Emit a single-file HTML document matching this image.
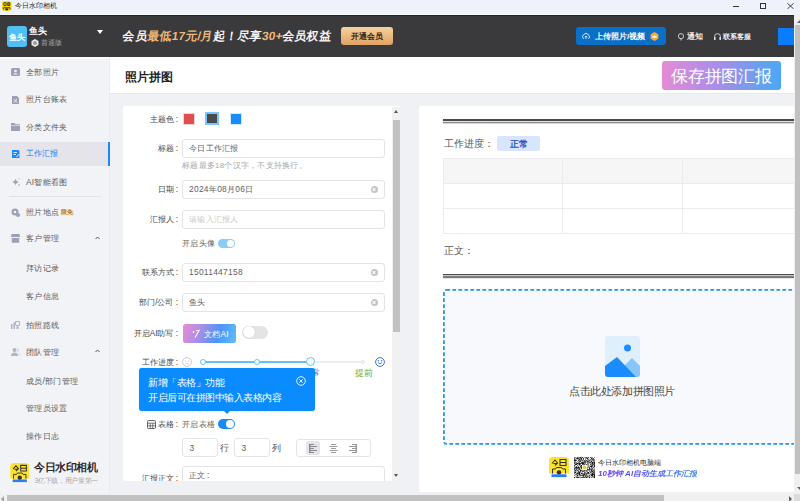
<!DOCTYPE html>
<html><head><meta charset="utf-8">
<style>
@font-face{font-family:"LS";src:local("Liberation Sans");unicode-range:U+2E80-9FFF,U+F900-FAFF,U+FE30-FE4F,U+FF00-FFEF;size-adjust:133.3%}
*{margin:0;padding:0;box-sizing:border-box}
html,body{width:800px;height:501px;overflow:hidden;background:#f0f1f5;font-family:"LS","Liberation Sans",sans-serif;color:#555}
.a{position:absolute}
.t{white-space:nowrap;line-height:1}
.lbl{font-size:8.3px;color:#484848;text-align:right}
.cl{display:inline-block;width:3px;margin-left:1.5px}
.inp{left:182px;width:203px;border:1px solid #e4e4e4;border-radius:3px;background:#fff}
.itx{font-size:8.4px;letter-spacing:0.3px;color:#606266}
.clr{left:370.5px;width:7px;height:7px;border-radius:50%;background:#c0c4cc}
.clr::before,.clr::after{content:"";position:absolute;left:1.5px;top:3px;width:4px;height:1px;background:#fff;transform:rotate(45deg)}
.clr::after{transform:rotate(-45deg)}
</style></head><body>
<!-- title bar -->
<div class="a" style="left:0;top:0;width:800px;height:14px;background:#eef2fb"></div>
<div class="a" style="left:0;top:14px;width:800px;height:1px;background:#fafbfd"></div>
<div class="a" style="left:0;top:15px;width:794px;height:1px;background:#252527"></div>
<svg class="a" style="left:2px;top:1px" width="9.5" height="10" viewBox="0 0 10 10"><rect width="10" height="10" rx="2" fill="#f7d500"/><path d="M2 1.5H4.3V4.5H2ZM6 1.5H8.2V4.5H6ZM6 3H8.2" stroke="#222" stroke-width="0.8" fill="none"/><path d="M1.5 8.5V6.8H8.5V8.5" stroke="#222" stroke-width="0.8" fill="none"/><rect x="3.5" y="7.5" width="3" height="2" fill="#223"/></svg>
<div class="a t" style="left:15px;top:2px;font-size:7.3px;color:#222">今日水印相机</div>
<div class="a" style="left:733px;top:6px;width:6px;height:1px;background:#333"></div>
<div class="a" style="left:760px;top:3px;width:6px;height:6px;border:1px solid #333"></div>
<svg class="a" style="left:787px;top:2.8px" width="7" height="6.2" viewBox="0 0 7 6.2"><path d="M0.3 0.2L6.7 6M6.7 0.2L0.3 6" stroke="#333" stroke-width="0.9"/></svg>

<!-- dark header -->
<div class="a" style="left:0;top:16px;width:794px;height:41px;background:#3a3a3c"></div>
<div class="a" style="left:6.5px;top:26px;width:20.3px;height:20.7px;background:#50bff3;border-radius:3px"></div>
<div class="a t" style="left:8.7px;top:32.5px;font-size:8.4px;letter-spacing:0.1px;color:#fff;font-weight:bold">鱼头</div>
<div class="a t" style="left:29px;top:27px;font-size:8.5px;letter-spacing:-0.5px;color:#fff;font-weight:bold">鱼头</div>
<svg class="a" style="left:31px;top:38.8px" width="8" height="8" viewBox="0 0 8 8"><path d="M4 0L7.5 2V6L4 8L0.5 6V2Z" fill="#e8e8e8"/><circle cx="4" cy="4" r="2" fill="#9c9c9c"/></svg>
<div class="a t" style="left:40.5px;top:39px;font-size:7.4px;letter-spacing:0.2px;color:#a8a8a8">普通版</div>
<div class="a" style="left:97px;top:30px;width:0;height:0;border-left:3px solid transparent;border-right:3px solid transparent;border-top:4px solid #fff"></div>

<div class="a t" style="left:122px;top:30.7px;font-size:11.8px;letter-spacing:0.2px;color:#f4f4f4;font-weight:700;transform:skewX(-8deg);transform-origin:0 100%">会员<span style="color:#f0b878">最低17元/月</span>起！尽享<span style="color:#f0b878">30+</span>会员权益</div>
<div class="a" style="left:340.5px;top:27.3px;width:52px;height:18px;border-radius:3px;background:linear-gradient(#f7d19e,#e0a263)"></div>
<div class="a t" style="left:351px;top:33px;font-size:8px;letter-spacing:-0.1px;color:#3c240c;font-weight:bold">开通会员</div>

<div class="a" style="left:576px;top:27px;width:90px;height:18px;border-radius:3px;background:#0a6fc6"></div>
<div class="a t" style="left:595px;top:33px;font-size:8px;color:#fff;font-weight:bold">上传照片/视频</div>
<svg class="a" style="left:649.5px;top:31.7px" width="9" height="9" viewBox="0 0 9 9"><path d="M4.5 0L8.4 2.25V6.75L4.5 9L0.6 6.75V2.25Z" fill="#f6a73a"/><path d="M2.5 3.5L3.5 4.5L4.5 3L5.5 4.5L6.5 3.5V5.8H2.5Z" fill="#fff"/></svg>
<svg class="a" style="left:582px;top:33px" width="8" height="6" viewBox="0 0 8 6"><path d="M2 5.5H1.8A1.8 1.8 0 0 1 1.8 2A2.3 2.3 0 0 1 6.2 2A1.8 1.8 0 0 1 6.2 5.5H6" stroke="#fff" stroke-width="0.8" fill="none"/><path d="M4 6V3M2.8 4.2L4 3L5.2 4.2" stroke="#fff" stroke-width="0.8" fill="none"/></svg>
<svg class="a" style="left:678px;top:33px" width="6" height="8" viewBox="0 0 6 8"><path d="M3 7.5V5.8M3 5.8A2.5 2.5 0 1 1 3 0.6A2.5 2.5 0 0 1 3 5.8Z" stroke="#ddd" stroke-width="0.9" fill="none"/></svg>
<svg class="a" style="left:714px;top:33px" width="7" height="7" viewBox="0 0 7 7"><path d="M0.6 5V3.5A2.9 2.9 0 0 1 6.4 3.5V5" stroke="#ddd" stroke-width="0.9" fill="none"/><rect x="0" y="4" width="1.6" height="3" rx="0.5" fill="#ddd"/><rect x="5.4" y="4" width="1.6" height="3" rx="0.5" fill="#ddd"/></svg>
<div class="a t" style="left:686.5px;top:33px;font-size:7.6px;color:#f0f0f0;font-weight:bold">通知</div>
<div class="a t" style="left:723px;top:33px;font-size:7.4px;color:#f0f0f0;font-weight:bold">联系客服</div>
<div class="a" style="left:778px;top:28px;width:16px;height:17px;background:#0a7cff"></div>

<!-- sidebar -->
<div class="a" style="left:0;top:57px;width:110px;height:444px;background:#f2f3f7"></div>
<div class="a" style="left:0;top:57px;width:110px;height:2px;background:#f9fafc"></div>
<div class="a" style="left:109px;top:57px;width:1px;height:437px;background:#ebecf0"></div>
<div class="a" style="left:0;top:142px;width:110px;height:24px;background:#e4e4ea"></div>
<div class="a" style="left:108px;top:142px;width:2px;height:24px;background:#1a88ff"></div>

<svg class="a" style="left:11px;top:68px" width="9" height="8" viewBox="0 0 9 8"><rect x="0" y="0" width="9" height="8" rx="1.5" fill="#9ea0b6"/><circle cx="4.5" cy="3" r="1.3" fill="#f2f3f7"/><path d="M2 6.5 Q4.5 4 7 6.5Z" fill="#f2f3f7"/></svg>
<svg class="a" style="left:12px;top:96px" width="7" height="8" viewBox="0 0 7 8"><path d="M0 0H5L7 2V8H0Z" fill="#9ea0b6"/><path d="M2 3L5 6.5M5 3L2 6.5" stroke="#f2f3f7" stroke-width="0.9"/></svg>
<svg class="a" style="left:11px;top:123px" width="9" height="8" viewBox="0 0 9 8"><path d="M0 0H3.5L4.5 1.2H9V8H0Z" fill="#9ea0b6"/><rect x="0" y="2" width="9" height="0.6" fill="#f2f3f7"/></svg>
<svg class="a" style="left:12px;top:150px" width="8" height="8" viewBox="0 0 8 8"><path d="M0 0H6.5L7.5 1V8H0Z" fill="#1a88ff"/><path d="M1.5 2.5H5M1.5 4.5H4" stroke="#fff" stroke-width="0.8"/><path d="M4.5 7L7.5 4" stroke="#fff" stroke-width="1"/></svg>
<svg class="a" style="left:12px;top:178px" width="8" height="8" viewBox="0 0 8 8"><path d="M3.5 0.5Q4 3.5 7 4Q4 4.5 3.5 7.5Q3 4.5 0 4Q3 3.5 3.5 0.5Z" fill="#9ea0b6"/><circle cx="7" cy="7" r="0.8" fill="#9ea0b6"/><circle cx="6.8" cy="1" r="0.6" fill="#9ea0b6"/></svg>
<svg class="a" style="left:11px;top:208px" width="9" height="9" viewBox="0 0 9 9"><circle cx="4" cy="4" r="3.5" fill="#9ea0b6"/><circle cx="4" cy="4" r="1.3" fill="#f2f3f7"/><circle cx="7" cy="7" r="2" fill="#9ea0b6"/></svg>
<svg class="a" style="left:11px;top:234px" width="9" height="9" viewBox="0 0 9 9"><path d="M0.5 0H8.5L9 3H0Z" fill="#9ea0b6"/><rect x="0.8" y="3.8" width="7.4" height="5" fill="#9ea0b6"/><rect x="0" y="3" width="9" height="0.7" fill="#f2f3f7"/></svg>
<svg class="a" style="left:11px;top:321px" width="9" height="8" viewBox="0 0 9 8"><rect x="0" y="3" width="1.5" height="5" fill="#b2b4c6"/><rect x="2.5" y="1.5" width="1.5" height="6.5" fill="#b2b4c6"/><circle cx="6.5" cy="2.5" r="2.3" fill="none" stroke="#b2b4c6" stroke-width="1.2"/><rect x="5.5" y="5.5" width="2" height="2.5" fill="#b2b4c6"/></svg>
<svg class="a" style="left:11px;top:348px" width="9" height="8" viewBox="0 0 9 8"><circle cx="3.5" cy="2" r="2" fill="#b2b4c6"/><path d="M0 8Q0 4.5 3.5 4.5Q7 4.5 7 8Z" fill="#b2b4c6"/><path d="M6 0.5A1.8 1.8 0 0 1 6 4M7.5 5Q9 6 9 8" stroke="#c4c6d4" stroke-width="0.8" fill="none"/></svg>
<svg class="a" style="left:95px;top:236px" width="5" height="4" viewBox="0 0 5 4"><path d="M0.5 3L2.5 1L4.5 3" stroke="#555" stroke-width="1" fill="none"/></svg>
<svg class="a" style="left:95px;top:349px" width="5" height="4" viewBox="0 0 5 4"><path d="M0.5 3L2.5 1L4.5 3" stroke="#555" stroke-width="1" fill="none"/></svg>
<div class="a" style="left:60.5px;top:208.6px;width:13.5px;height:7.2px;border-radius:1.5px;background:#fde8c2"></div>
<div class="a t" style="left:61px;top:210px;font-size:5.5px;color:#b47c2c;font-weight:bold">限免</div>
<div class="a" style="left:9px;top:196px;width:92px;height:1px;background:#e0e1e6"></div>

<div class="a t" style="left:26px;top:68px;font-size:8.4px;letter-spacing:0.25px;color:#5a5a5a">全部照片</div>
<div class="a t" style="left:26px;top:95px;font-size:8.4px;letter-spacing:0.25px;color:#5a5a5a">照片台账表</div>
<div class="a t" style="left:26px;top:123px;font-size:8.4px;letter-spacing:0.25px;color:#5a5a5a">分类文件夹</div>
<div class="a t" style="left:26px;top:150px;font-size:8.2px;color:#1a80f0">工作汇报</div>
<div class="a t" style="left:26px;top:178px;font-size:8.4px;letter-spacing:0.25px;color:#5a5a5a">AI智能看图</div>
<div class="a t" style="left:26px;top:208px;font-size:8.4px;letter-spacing:0.25px;color:#5a5a5a">照片地点</div>
<div class="a t" style="left:26px;top:234px;font-size:8.4px;letter-spacing:0.25px;color:#5a5a5a">客户管理</div>
<div class="a t" style="left:26px;top:264px;font-size:8.4px;letter-spacing:0.25px;color:#5a5a5a">拜访记录</div>
<div class="a t" style="left:26px;top:292px;font-size:8.4px;letter-spacing:0.25px;color:#5a5a5a">客户信息</div>
<div class="a t" style="left:26px;top:321px;font-size:8.4px;letter-spacing:0.25px;color:#5a5a5a">拍照路线</div>
<div class="a t" style="left:26px;top:348px;font-size:8.4px;letter-spacing:0.25px;color:#5a5a5a">团队管理</div>
<div class="a t" style="left:26px;top:377px;font-size:8.4px;letter-spacing:0.25px;color:#5a5a5a">成员/部门管理</div>
<div class="a t" style="left:26px;top:404px;font-size:8.4px;letter-spacing:0.25px;color:#5a5a5a">管理员设置</div>
<div class="a t" style="left:26px;top:432px;font-size:8.4px;letter-spacing:0.25px;color:#5a5a5a">操作日志</div>

<svg class="a" style="left:9.5px;top:462.5px" width="19.5" height="20" viewBox="0 0 20 21"><rect x="0" y="0" width="20" height="21" rx="4" fill="#fafbfd"/><path d="M4 0H16A4 4 0 0 1 20 4V16.5H0V4A4 4 0 0 1 4 0Z" fill="#fde12f"/><path d="M3 6.5L6 3L9 6.5M4.5 6.5H8L6 8.5M11 2.5H17V8.5H11ZM11 5.5H17" stroke="#333" stroke-width="1.1" fill="none"/><path d="M3.5 16.5V12H6.5L7.5 10.5H12.5L13.5 12H16.5V16.5" stroke="#333" stroke-width="1" fill="none"/><circle cx="10" cy="15.5" r="2.3" fill="#333"/><rect x="2.5" y="17.3" width="15" height="2.8" fill="#2f7cf6"/></svg>
<div class="a t" style="left:34px;top:462px;font-size:10.5px;letter-spacing:-0.45px;color:#2a2a2a;font-weight:bold">今日水印相机</div>
<div class="a t" style="left:34.5px;top:476.5px;font-size:7px;letter-spacing:-0.35px;color:#a8a8a8">3亿下载，用户量第一</div>

<!-- main header -->
<div class="a" style="left:110px;top:57px;width:684px;height:36px;background:#fff"></div>
<div class="a" style="left:110px;top:93px;width:684px;height:1px;background:#e8e9ee"></div>
<div class="a t" style="left:125px;top:70.5px;font-size:12px;color:#222;font-weight:bold">照片拼图</div>
<div class="a" style="left:662px;top:60.8px;width:118.5px;height:29.2px;border-radius:3px;background:linear-gradient(90deg,#e58bd6,#a38ee8 50%,#4aa8f6)"></div>
<div class="a t" style="left:671px;top:68px;font-size:17px;letter-spacing:-0.2px;color:#fff">保存拼图汇报</div>

<!-- form panel -->
<div class="a" style="left:123px;top:106px;width:278px;height:375px;background:#fff;border-radius:2px"></div>
<div class="a" style="left:392px;top:107px;width:9px;height:374px;background:#f1f1f1"></div>
<div class="a" style="left:392.5px;top:120px;width:7.5px;height:212px;background:#c1c1c1"></div>
<div class="a" style="left:394px;top:110px;width:0;height:0;border-left:2px solid transparent;border-right:2px solid transparent;border-bottom:3px solid #555"></div>
<div class="a" style="left:394px;top:474px;width:0;height:0;border-left:2px solid transparent;border-right:2px solid transparent;border-top:3px solid #555"></div>

<div class="a t lbl" style="right:622px;top:115px">主题色<span class="cl">:</span></div>
<div class="a" style="left:182.5px;top:112.5px;width:12px;height:12px;background:#e04f50;border:1px solid #f3d2d2"></div>
<div class="a" style="left:205px;top:112px;width:14px;height:13px;background:#4a4a4a;border:2px solid #7cc4ff"></div>
<div class="a" style="left:230px;top:112.5px;width:12px;height:12px;background:#1a8cff;border:1px solid #d4e8ff"></div>

<div class="a t lbl" style="right:622px;top:144px">标题<span class="cl">:</span></div>
<div class="a inp" style="top:139px;height:19px"></div>
<div class="a t itx" style="left:189px;top:144px">今日工作汇报</div>
<div class="a t" style="left:182px;top:162px;font-size:7.9px;letter-spacing:0.25px;color:#a8a8a8">标题最多18个汉字，不支持换行。</div>

<div class="a t lbl" style="right:622px;top:185px">日期<span class="cl">:</span></div>
<div class="a inp" style="top:180px;height:19px"></div>
<div class="a t itx" style="left:189px;top:185px">2024年08月06日</div>
<div class="a clr" style="top:186px"></div>

<div class="a t lbl" style="right:622px;top:215px">汇报人<span class="cl">:</span></div>
<div class="a inp" style="top:210px;height:19px"></div>
<div class="a t itx" style="left:189px;top:215px;color:#c8c8c8">请输入汇报人</div>

<div class="a t" style="left:182px;top:239px;font-size:8.4px;letter-spacing:0.3px;color:#666">开启头像</div>
<div class="a" style="left:218px;top:239px;width:17px;height:9px;border-radius:5px;background:#8ccbf8"></div>
<div class="a" style="left:227px;top:240px;width:7px;height:7px;border-radius:50%;background:#fff"></div>

<div class="a t lbl" style="right:622px;top:268px">联系方式<span class="cl">:</span></div>
<div class="a inp" style="top:263px;height:19px"></div>
<div class="a t itx" style="left:189px;top:268px">15011447158</div>
<div class="a clr" style="top:269px"></div>

<div class="a t lbl" style="right:622px;top:298px">部门/公司<span class="cl">:</span></div>
<div class="a inp" style="top:293px;height:19px"></div>
<div class="a t itx" style="left:189px;top:298px">鱼头</div>
<div class="a clr" style="top:299px"></div>

<div class="a t lbl" style="right:622px;top:329px">开启AI助写<span class="cl">:</span></div>
<div class="a" style="left:182.5px;top:324px;width:53px;height:19px;border-radius:2.5px;background:linear-gradient(110deg,#ec8bd2 0%,#b08ee6 30%,#4c94f8 65%,#5cc2fb 100%)"></div>
<svg class="a" style="left:191.5px;top:329px" width="9" height="9" viewBox="0 0 9 9"><path d="M7.5 0.8L3 8.5" stroke="#fff" stroke-width="1.1"/><circle cx="1.5" cy="3" r="0.9" fill="#fff"/><path d="M4 1.5H6.5" stroke="#fff" stroke-width="0.9"/></svg>
<div class="a t" style="left:204px;top:329.5px;font-size:8.4px;letter-spacing:0.2px;color:#fff">文档AI</div>
<div class="a" style="left:242px;top:325.5px;width:26px;height:13px;border-radius:6.5px;background:#e4e4e4"></div>
<div class="a" style="left:242.5px;top:326px;width:12px;height:12px;border-radius:50%;background:#fff;box-shadow:0 0 1px rgba(0,0,0,.25)"></div>

<div class="a t lbl" style="right:622px;top:358px">工作进度<span class="cl">:</span></div>
<svg class="a" style="left:182px;top:357px" width="10" height="10" viewBox="0 0 10 10"><circle cx="5" cy="5" r="4.4" stroke="#c4c4c4" stroke-width="0.9" fill="none"/><circle cx="3.4" cy="4" r="0.6" fill="#c4c4c4"/><circle cx="6.6" cy="4" r="0.6" fill="#c4c4c4"/><path d="M3.2 7.2Q5 5.8 6.8 7.2" stroke="#c4c4c4" stroke-width="0.8" fill="none"/></svg>
<div class="a" style="left:203px;top:361px;width:107px;height:2px;background:#62c0f6"></div>
<div class="a" style="left:310px;top:361px;width:54px;height:2px;background:#eee"></div>
<div class="a" style="left:200px;top:359px;width:6px;height:6px;border-radius:50%;background:#fff;border:1px solid #62c0f6"></div>
<div class="a" style="left:254px;top:359px;width:6px;height:6px;border-radius:50%;background:#fff;border:1px solid #62c0f6"></div>
<div class="a" style="left:306px;top:357px;width:9px;height:9px;border-radius:50%;background:#fff;border:1.5px solid #62c0f6"></div>
<div class="a" style="left:360.8px;top:359.7px;width:4.6px;height:4.6px;border-radius:50%;background:#fff;border:1px solid #e0e0e0"></div>
<svg class="a" style="left:375px;top:357px" width="10" height="10" viewBox="0 0 10 10"><circle cx="5" cy="5" r="4.4" stroke="#3a6ee6" stroke-width="1" fill="none"/><circle cx="3.3" cy="3.8" r="0.7" fill="#3a6ee6"/><circle cx="6.7" cy="3.8" r="0.7" fill="#3a6ee6"/><path d="M2.9 5.6Q5 8.2 7.1 5.6" stroke="#3a6ee6" stroke-width="0.9" fill="none"/></svg>
<div class="a t" style="left:312px;top:369px;font-size:8px;color:#3a6ee6">常</div>
<div class="a t" style="left:355px;top:369px;font-size:8.5px;color:#5aab3c">提前</div>

<svg class="a" style="left:147px;top:419.5px" width="9" height="9" viewBox="0 0 9 9"><rect x="0.5" y="0.5" width="8" height="8" rx="1.2" stroke="#555" stroke-width="0.9" fill="none"/><path d="M0.5 3.2H8.5M0.5 5.8H8.5M3.2 3.2V8.5M5.8 3.2V8.5" stroke="#555" stroke-width="0.8"/></svg>
<div class="a t lbl" style="right:622px;top:420px">表格<span class="cl">:</span></div>
<div class="a t" style="left:182px;top:420px;font-size:8.4px;letter-spacing:0.3px;color:#666">开启表格</div>
<div class="a" style="left:218px;top:419px;width:17px;height:10px;border-radius:5px;background:#1a88f8"></div>
<div class="a" style="left:226px;top:420px;width:8px;height:8px;border-radius:50%;background:#fff"></div>

<div class="a" style="left:182px;top:438px;width:36px;height:19px;border:1px solid #e4e4e4;border-radius:3px"></div>
<div class="a t itx" style="left:189.5px;top:443.8px">3</div>
<div class="a t" style="left:220px;top:444px;font-size:8.5px;color:#555">行</div>
<div class="a" style="left:234px;top:438px;width:36px;height:19px;border:1px solid #e4e4e4;border-radius:3px"></div>
<div class="a t itx" style="left:241.5px;top:443.8px">3</div>
<div class="a t" style="left:272px;top:444px;font-size:8.5px;color:#555">列</div>
<div class="a" style="left:296px;top:439px;width:75px;height:18px;border:1px solid #e4e4e4;border-radius:3px"></div>
<div class="a" style="left:306px;top:441px;width:14px;height:14px;border-radius:2px;background:#e4e5ea"></div>
<svg class="a" style="left:309px;top:444px" width="9" height="9" viewBox="0 0 9 9" fill="#8c8c8c"><rect x="0" y="0" width="5" height="1"/><rect x="0" y="2" width="8" height="1"/><rect x="0" y="4" width="5" height="1"/><rect x="0" y="6" width="8" height="1"/><rect x="0" y="8" width="5" height="1"/><rect x="0" y="0" width="1.5" height="9"/></svg>
<svg class="a" style="left:329px;top:444px" width="9" height="9" viewBox="0 0 9 9" fill="#9a9a9a"><rect x="2" y="0" width="5" height="1"/><rect x="0.5" y="2" width="8" height="1"/><rect x="2" y="4" width="5" height="1"/><rect x="0.5" y="6" width="8" height="1"/><rect x="2" y="8" width="5" height="1"/></svg>
<svg class="a" style="left:349px;top:444px" width="9" height="9" viewBox="0 0 9 9" fill="#9a9a9a"><rect x="3" y="0" width="5" height="1"/><rect x="0" y="2" width="8" height="1"/><rect x="3" y="4" width="5" height="1"/><rect x="0" y="6" width="8" height="1"/><rect x="3" y="8" width="5" height="1"/><rect x="6.5" y="0" width="1.5" height="9"/></svg>

<div class="a t lbl" style="right:622px;top:474px">汇报正文<span class="cl">:</span></div>
<div class="a inp" style="top:466px;height:30px"></div>
<div class="a t itx" style="left:189px;top:470.5px">正文<span class="cl">:</span></div>
<!-- overflow mask for bottom -->
<div class="a" style="left:123px;top:481px;width:278px;height:13px;background:#f0f1f5"></div>

<!-- tooltip -->
<div class="a" style="left:138.8px;top:368.2px;width:176px;height:42.8px;border-radius:3px;background:#0a8bff;box-shadow:0 0 1px rgba(10,139,255,.5)"></div>
<div class="a" style="left:223px;top:410px;width:0;height:0;border-left:4px solid transparent;border-right:4px solid transparent;border-top:4px solid #0a8bff"></div>
<div class="a t" style="left:148px;top:378px;font-size:9.6px;letter-spacing:-0.5px;color:#fff">新增「表格」功能</div>
<div class="a t" style="left:148px;top:393px;font-size:9.6px;letter-spacing:-0.5px;color:#fff">开启后可在拼图中输入表格内容</div>
<svg class="a" style="left:295.5px;top:375.5px" width="10" height="10" viewBox="0 0 10 10"><circle cx="5" cy="5" r="4.3" stroke="#fff" stroke-width="0.9" fill="none"/><path d="M3.3 3.3L6.7 6.7M6.7 3.3L3.3 6.7" stroke="#fff" stroke-width="0.9"/></svg>

<!-- preview panel -->
<div class="a" style="left:419px;top:106px;width:375px;height:386px;background:#fff;border-radius:2px 0 0 2px"></div>
<div class="a" style="left:443px;top:119px;width:351px;height:5px;background:linear-gradient(#484848 0,#484848 2px,#e2e2e2 2px,#e2e2e2 3px,#8e8e8e 3px,#8e8e8e 4px,#d4d4d4 4px)"></div>
<div class="a t" style="left:444px;top:139.5px;font-size:9.5px;color:#555;font-family:'LS','Liberation Serif',serif">工作进度：</div>
<div class="a" style="left:497px;top:136px;width:43px;height:14.5px;border-radius:2px;background:#d7e5fd"></div>
<div class="a t" style="left:510px;top:139.5px;font-size:9px;color:#2a50d0;font-weight:bold">正常</div>
<div class="a" style="left:443px;top:158px;width:351px;height:76px;border:1px solid #ebebeb;border-right:none"></div>
<div class="a" style="left:444px;top:159px;width:350px;height:24px;background:#f6f6f6"></div>
<div class="a" style="left:443px;top:183px;width:351px;height:1px;background:#ebebeb"></div>
<div class="a" style="left:443px;top:208px;width:351px;height:1px;background:#ebebeb"></div>
<div class="a" style="left:562px;top:158px;width:1px;height:76px;background:#ebebeb"></div>
<div class="a" style="left:682px;top:158px;width:1px;height:76px;background:#ebebeb"></div>
<div class="a t" style="left:444px;top:247px;font-size:9.5px;color:#555;font-family:'LS','Liberation Serif',serif">正文：</div>
<div class="a" style="left:443px;top:274px;width:351px;height:5px;background:linear-gradient(#4c4c4c 0,#4c4c4c 1px,#cccccc 1px,#cccccc 2px,#7c7c7c 2px,#7c7c7c 4px,#e2e2e2 4px)"></div>

<svg class="a" style="left:443px;top:289px" width="351" height="156" viewBox="0 0 351 156"><rect x="0.9" y="0.9" width="380" height="154" rx="2.5" fill="#f7f9fc" stroke="#2196f5" stroke-width="1.8" stroke-dasharray="3.7 2.3"/></svg>
<svg class="a" style="left:605px;top:336px" width="35" height="41" viewBox="0 0 35 41">
<rect x="0" y="0" width="35" height="41" rx="3" fill="#dff0fc"/>
<circle cx="22.5" cy="12" r="3.5" fill="#1a8cff"/>
<path d="M19 30 L27 22 L35 30 L35 38 Q35 41 32 41 L25 41 Z" fill="#86c6fb"/>
<path d="M0 30 L12 21 L31 41 L3 41 Q0 41 0 38 Z" fill="#1a8cff"/>
</svg>
<div class="a t" style="left:569px;top:386px;font-size:10.6px;letter-spacing:-0.4px;color:#444">点击此处添加拼图照片</div>

<svg class="a" style="left:549px;top:457px" width="20" height="21" viewBox="0 0 20 21"><rect x="0" y="0" width="20" height="21" rx="4" fill="#fafbfd"/><path d="M4 0H16A4 4 0 0 1 20 4V16.5H0V4A4 4 0 0 1 4 0Z" fill="#fde12f"/><path d="M3 6.5L6 3L9 6.5M4.5 6.5H8L6 8.5M11 2.5H17V8.5H11ZM11 5.5H17" stroke="#333" stroke-width="1.1" fill="none"/><path d="M3.5 16.5V12H6.5L7.5 10.5H12.5L13.5 12H16.5V16.5" stroke="#333" stroke-width="1" fill="none"/><circle cx="10" cy="15.5" r="2.3" fill="#333"/><rect x="2.5" y="17.3" width="15" height="2.8" fill="#2f7cf6"/></svg>
<svg class="a" style="left:574px;top:456.5px" width="21" height="21" viewBox="0 0 42 42"><rect width="42" height="42" fill="#fff"/><path d="M6 0h2v1h-2zM11 0h4v1h-4zM16 0h3v1h-3zM21 0h1v1h-1zM23 0h1v1h-1zM25 0h2v1h-2zM28 0h2v1h-2zM32 0h1v1h-1zM34 0h1v1h-1zM36 0h1v1h-1zM41 0h1v1h-1zM0 1h5v1h-5zM6 1h1v1h-1zM8 1h2v1h-2zM11 1h3v1h-3zM15 1h1v1h-1zM17 1h1v1h-1zM20 1h1v1h-1zM22 1h1v1h-1zM24 1h3v1h-3zM28 1h1v1h-1zM32 1h3v1h-3zM36 1h1v1h-1zM40 1h1v1h-1zM0 2h2v1h-2zM4 2h1v1h-1zM6 2h6v1h-6zM14 2h2v1h-2zM17 2h3v1h-3zM22 2h3v1h-3zM26 2h2v1h-2zM29 2h1v1h-1zM34 2h3v1h-3zM38 2h2v1h-2zM1 3h2v1h-2zM4 3h5v1h-5zM12 3h4v1h-4zM18 3h1v1h-1zM24 3h1v1h-1zM26 3h2v1h-2zM30 3h1v1h-1zM34 3h3v1h-3zM38 3h1v1h-1zM0 4h1v1h-1zM4 4h1v1h-1zM10 4h3v1h-3zM15 4h1v1h-1zM19 4h1v1h-1zM23 4h1v1h-1zM28 4h3v1h-3zM32 4h1v1h-1zM35 4h7v1h-7zM0 5h4v1h-4zM6 5h1v1h-1zM8 5h5v1h-5zM14 5h2v1h-2zM17 5h3v1h-3zM23 5h1v1h-1zM26 5h2v1h-2zM33 5h1v1h-1zM35 5h2v1h-2zM39 5h1v1h-1zM0 6h4v1h-4zM5 6h1v1h-1zM9 6h1v1h-1zM11 6h3v1h-3zM15 6h4v1h-4zM20 6h2v1h-2zM24 6h3v1h-3zM29 6h3v1h-3zM33 6h1v1h-1zM35 6h1v1h-1zM39 6h1v1h-1zM41 6h1v1h-1zM0 7h6v1h-6zM8 7h3v1h-3zM13 7h2v1h-2zM16 7h1v1h-1zM20 7h1v1h-1zM22 7h2v1h-2zM25 7h2v1h-2zM28 7h1v1h-1zM31 7h2v1h-2zM35 7h6v1h-6zM1 8h2v1h-2zM6 8h1v1h-1zM11 8h1v1h-1zM13 8h1v1h-1zM17 8h2v1h-2zM20 8h1v1h-1zM22 8h2v1h-2zM25 8h5v1h-5zM33 8h3v1h-3zM37 8h1v1h-1zM39 8h2v1h-2zM0 9h1v1h-1zM2 9h1v1h-1zM6 9h1v1h-1zM8 9h1v1h-1zM10 9h4v1h-4zM15 9h1v1h-1zM18 9h1v1h-1zM20 9h2v1h-2zM23 9h1v1h-1zM25 9h2v1h-2zM28 9h1v1h-1zM30 9h2v1h-2zM34 9h2v1h-2zM39 9h1v1h-1zM41 9h1v1h-1zM0 10h2v1h-2zM3 10h3v1h-3zM9 10h1v1h-1zM11 10h1v1h-1zM15 10h5v1h-5zM21 10h1v1h-1zM23 10h2v1h-2zM27 10h7v1h-7zM35 10h7v1h-7zM0 11h1v1h-1zM2 11h1v1h-1zM6 11h1v1h-1zM8 11h1v1h-1zM10 11h1v1h-1zM13 11h6v1h-6zM20 11h4v1h-4zM26 11h2v1h-2zM31 11h1v1h-1zM33 11h2v1h-2zM36 11h3v1h-3zM40 11h2v1h-2zM0 12h2v1h-2zM3 12h1v1h-1zM5 12h10v1h-10zM16 12h8v1h-8zM27 12h4v1h-4zM32 12h1v1h-1zM36 12h2v1h-2zM39 12h3v1h-3zM0 13h1v1h-1zM3 13h6v1h-6zM10 13h2v1h-2zM13 13h7v1h-7zM26 13h1v1h-1zM32 13h1v1h-1zM34 13h5v1h-5zM40 13h2v1h-2zM2 14h4v1h-4zM9 14h5v1h-5zM17 14h3v1h-3zM21 14h1v1h-1zM24 14h2v1h-2zM27 14h3v1h-3zM32 14h1v1h-1zM35 14h1v1h-1zM37 14h2v1h-2zM40 14h1v1h-1zM0 15h1v1h-1zM2 15h4v1h-4zM7 15h1v1h-1zM9 15h3v1h-3zM16 15h2v1h-2zM19 15h4v1h-4zM25 15h1v1h-1zM27 15h1v1h-1zM32 15h3v1h-3zM36 15h6v1h-6zM0 16h1v1h-1zM2 16h1v1h-1zM8 16h1v1h-1zM10 16h1v1h-1zM13 16h5v1h-5zM21 16h1v1h-1zM23 16h1v1h-1zM25 16h1v1h-1zM34 16h2v1h-2zM37 16h1v1h-1zM39 16h3v1h-3zM0 17h2v1h-2zM6 17h2v1h-2zM11 17h1v1h-1zM13 17h3v1h-3zM18 17h1v1h-1zM21 17h2v1h-2zM27 17h3v1h-3zM31 17h2v1h-2zM35 17h3v1h-3zM40 17h2v1h-2zM4 18h2v1h-2zM8 18h1v1h-1zM12 18h1v1h-1zM15 18h6v1h-6zM22 18h1v1h-1zM32 18h6v1h-6zM40 18h2v1h-2zM0 19h3v1h-3zM4 19h1v1h-1zM6 19h1v1h-1zM9 19h1v1h-1zM12 19h4v1h-4zM18 19h3v1h-3zM24 19h2v1h-2zM27 19h4v1h-4zM32 19h4v1h-4zM37 19h2v1h-2zM40 19h2v1h-2zM1 20h1v1h-1zM3 20h8v1h-8zM12 20h4v1h-4zM18 20h3v1h-3zM22 20h1v1h-1zM27 20h2v1h-2zM30 20h1v1h-1zM34 20h1v1h-1zM38 20h1v1h-1zM40 20h1v1h-1zM1 21h5v1h-5zM7 21h5v1h-5zM14 21h2v1h-2zM19 21h2v1h-2zM23 21h4v1h-4zM28 21h1v1h-1zM30 21h2v1h-2zM34 21h2v1h-2zM37 21h3v1h-3zM0 22h1v1h-1zM2 22h2v1h-2zM5 22h2v1h-2zM8 22h1v1h-1zM10 22h2v1h-2zM14 22h8v1h-8zM24 22h2v1h-2zM30 22h2v1h-2zM33 22h2v1h-2zM36 22h2v1h-2zM39 22h1v1h-1zM0 23h3v1h-3zM4 23h6v1h-6zM11 23h2v1h-2zM15 23h1v1h-1zM18 23h1v1h-1zM20 23h2v1h-2zM23 23h1v1h-1zM25 23h3v1h-3zM30 23h2v1h-2zM33 23h1v1h-1zM35 23h1v1h-1zM37 23h1v1h-1zM41 23h1v1h-1zM1 24h2v1h-2zM4 24h3v1h-3zM10 24h1v1h-1zM13 24h1v1h-1zM15 24h3v1h-3zM19 24h1v1h-1zM21 24h4v1h-4zM26 24h5v1h-5zM33 24h3v1h-3zM37 24h1v1h-1zM40 24h2v1h-2zM0 25h2v1h-2zM5 25h1v1h-1zM8 25h4v1h-4zM13 25h1v1h-1zM17 25h1v1h-1zM19 25h2v1h-2zM24 25h1v1h-1zM26 25h1v1h-1zM29 25h5v1h-5zM35 25h1v1h-1zM37 25h3v1h-3zM1 26h5v1h-5zM7 26h3v1h-3zM12 26h2v1h-2zM15 26h3v1h-3zM19 26h3v1h-3zM24 26h3v1h-3zM28 26h1v1h-1zM31 26h1v1h-1zM33 26h3v1h-3zM37 26h2v1h-2zM41 26h1v1h-1zM0 27h1v1h-1zM2 27h2v1h-2zM6 27h2v1h-2zM10 27h1v1h-1zM12 27h4v1h-4zM18 27h1v1h-1zM20 27h1v1h-1zM22 27h3v1h-3zM26 27h1v1h-1zM28 27h1v1h-1zM31 27h1v1h-1zM34 27h2v1h-2zM37 27h3v1h-3zM41 27h1v1h-1zM3 28h1v1h-1zM5 28h1v1h-1zM8 28h1v1h-1zM11 28h1v1h-1zM13 28h1v1h-1zM17 28h3v1h-3zM23 28h5v1h-5zM30 28h1v1h-1zM33 28h1v1h-1zM35 28h3v1h-3zM41 28h1v1h-1zM0 29h2v1h-2zM3 29h1v1h-1zM6 29h1v1h-1zM8 29h2v1h-2zM11 29h3v1h-3zM15 29h3v1h-3zM19 29h3v1h-3zM30 29h1v1h-1zM33 29h9v1h-9zM0 30h1v1h-1zM2 30h2v1h-2zM7 30h6v1h-6zM21 30h1v1h-1zM26 30h4v1h-4zM32 30h2v1h-2zM35 30h2v1h-2zM38 30h4v1h-4zM0 31h5v1h-5zM7 31h1v1h-1zM9 31h4v1h-4zM15 31h1v1h-1zM17 31h1v1h-1zM20 31h4v1h-4zM25 31h2v1h-2zM28 31h3v1h-3zM33 31h1v1h-1zM35 31h2v1h-2zM39 31h1v1h-1zM41 31h1v1h-1zM0 32h2v1h-2zM5 32h8v1h-8zM14 32h4v1h-4zM19 32h3v1h-3zM23 32h3v1h-3zM27 32h2v1h-2zM30 32h1v1h-1zM32 32h1v1h-1zM34 32h4v1h-4zM39 32h3v1h-3zM2 33h1v1h-1zM5 33h4v1h-4zM10 33h2v1h-2zM14 33h2v1h-2zM17 33h2v1h-2zM21 33h2v1h-2zM24 33h1v1h-1zM26 33h4v1h-4zM31 33h1v1h-1zM36 33h3v1h-3zM40 33h1v1h-1zM0 34h1v1h-1zM4 34h1v1h-1zM7 34h1v1h-1zM10 34h4v1h-4zM15 34h2v1h-2zM18 34h1v1h-1zM20 34h3v1h-3zM25 34h2v1h-2zM28 34h1v1h-1zM31 34h2v1h-2zM34 34h1v1h-1zM36 34h6v1h-6zM2 35h5v1h-5zM8 35h4v1h-4zM17 35h5v1h-5zM23 35h3v1h-3zM32 35h1v1h-1zM34 35h8v1h-8zM1 36h1v1h-1zM5 36h3v1h-3zM11 36h3v1h-3zM15 36h5v1h-5zM22 36h1v1h-1zM24 36h1v1h-1zM26 36h1v1h-1zM30 36h1v1h-1zM34 36h5v1h-5zM40 36h2v1h-2zM0 37h1v1h-1zM2 37h1v1h-1zM6 37h3v1h-3zM11 37h2v1h-2zM14 37h2v1h-2zM17 37h7v1h-7zM25 37h2v1h-2zM29 37h3v1h-3zM33 37h5v1h-5zM40 37h2v1h-2zM3 38h2v1h-2zM6 38h1v1h-1zM8 38h1v1h-1zM16 38h1v1h-1zM19 38h1v1h-1zM21 38h3v1h-3zM26 38h1v1h-1zM28 38h1v1h-1zM31 38h1v1h-1zM34 38h1v1h-1zM37 38h1v1h-1zM40 38h2v1h-2zM5 39h2v1h-2zM10 39h1v1h-1zM12 39h1v1h-1zM18 39h2v1h-2zM22 39h1v1h-1zM24 39h4v1h-4zM29 39h2v1h-2zM32 39h1v1h-1zM36 39h6v1h-6zM0 40h2v1h-2zM4 40h3v1h-3zM8 40h5v1h-5zM14 40h2v1h-2zM17 40h1v1h-1zM19 40h1v1h-1zM21 40h1v1h-1zM23 40h3v1h-3zM30 40h3v1h-3zM35 40h1v1h-1zM38 40h4v1h-4zM0 41h2v1h-2zM3 41h2v1h-2zM6 41h4v1h-4zM12 41h1v1h-1zM15 41h7v1h-7zM23 41h5v1h-5zM29 41h3v1h-3zM34 41h1v1h-1zM36 41h1v1h-1zM40 41h2v1h-2z" fill="#1a1a1a"/><rect x="16" y="16" width="10" height="10" fill="#fff"/><rect x="17.5" y="17.5" width="7" height="7" fill="#e8c640"/></svg>
<div class="a t" style="left:598px;top:458.5px;font-size:7px;color:#2a2a2a">今日水印相机电脑端</div>
<div class="a t" style="left:598px;top:469.5px;font-size:8px;font-style:italic;font-weight:bold;background:linear-gradient(90deg,#6a34f0,#3a86f6);-webkit-background-clip:background-clip:text;-webkit-background-clip:text;color:transparent">10秒钟 AI自动生成工作汇报</div>

<!-- scrollbars -->
<div class="a" style="left:794px;top:14px;width:6px;height:487px;background:#f0f0f0"></div>
<div class="a" style="left:795px;top:25px;width:5px;height:449px;background:#c1c1c1"></div>
<div class="a" style="left:797px;top:20px;width:0;height:0;border-left:3px solid transparent;border-right:3px solid transparent;border-bottom:3px solid #606060"></div>
<div class="a" style="left:797px;top:487px;width:0;height:0;border-left:3px solid transparent;border-right:3px solid transparent;border-top:3px solid #606060"></div>
<div class="a" style="left:0;top:494px;width:794px;height:7px;background:#f0f0f0"></div>
<div class="a" style="left:794px;top:494px;width:6px;height:7px;background:#dcdcdc"></div>
<div class="a" style="left:7px;top:495px;width:657px;height:6px;background:#c1c1c1"></div>
<div class="a" style="left:789px;top:496px;width:0;height:0;border-top:3px solid transparent;border-bottom:3px solid transparent;border-left:3px solid #606060"></div>
<div class="a" style="left:1px;top:496px;width:0;height:0;border-top:3px solid transparent;border-bottom:3px solid transparent;border-right:3px solid #a0a0a0"></div>
</body></html>
